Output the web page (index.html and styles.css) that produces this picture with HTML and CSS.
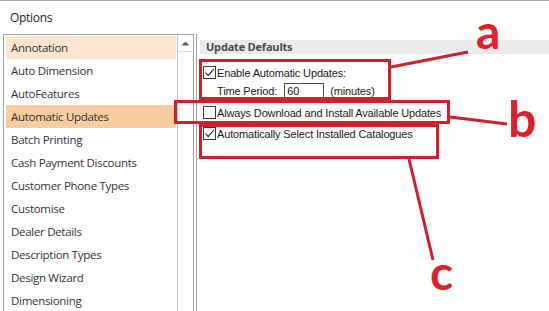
FILE: index.html
```html
<!DOCTYPE html>
<html>
<head>
<meta charset="utf-8">
<link rel="stylesheet" href="styles.css">
</head>
<body>
<div class="window">
  <div class="titlebar">Options</div>
  <div class="main">
    <div class="list">
      <ul class="items">
        <li class="item hover">Annotation</li>
        <li class="item">Auto Dimension</li>
        <li class="item">AutoFeatures</li>
        <li class="item selected">Automatic Updates</li>
        <li class="item">Batch Printing</li>
        <li class="item">Cash Payment Discounts</li>
        <li class="item">Customer Phone Types</li>
        <li class="item">Customise</li>
        <li class="item">Dealer Details</li>
        <li class="item">Description Types</li>
        <li class="item">Design Wizard</li>
        <li class="item">Dimensioning</li>
      </ul>
      <div class="scrollbar">
        <div class="sb-btn">
          <svg width="9" height="5" viewBox="0 0 9 5"><path d="M0.5 4.5 L4.5 0.5 L8.5 4.5 Z" fill="#5f5f5f"/></svg>
        </div>
      </div>
    </div>
    <div class="panel">
      <div class="group-head">Update Defaults</div>
      <div class="opt opt-first">
        <span class="cb"><svg width="11" height="11" viewBox="0 0 11 11"><path d="M1.5 5.5 L4.2 8.6 L9.8 2" fill="none" stroke="#222" stroke-width="1.1"/></svg></span>
        <span class="opt-text">Enable Automatic Updates:</span>
      </div>
      <div class="time-row">
        <span class="opt-text">Time Period:</span>
        <span class="input">60</span>
        <span class="opt-text">(minutes)</span>
      </div>
      <div class="opt opt-second">
        <span class="cb"></span>
        <span class="opt-text">Always Download and Install Available Updates</span>
      </div>
      <div class="opt opt-third">
        <span class="cb"><svg width="11" height="11" viewBox="0 0 11 11"><path d="M1.5 5.5 L4.2 8.6 L9.8 2" fill="none" stroke="#222" stroke-width="1.1"/></svg></span>
        <span class="opt-text">Automatically Select Installed Catalogues</span>
      </div>
    </div>
  </div>
</div>
<svg class="annot" width="549" height="311" viewBox="0 0 549 311">
  <g fill="none" stroke="#d21f2e" stroke-width="3">
    <rect x="200.5" y="60.5" width="189" height="38"/>
    <rect x="175.5" y="101.5" width="273" height="21"/>
    <rect x="200.5" y="125.5" width="237" height="32"/>
    <line x1="391" y1="67" x2="468" y2="52"/>
    <line x1="450" y1="117" x2="507" y2="124"/>
    <line x1="409" y1="159" x2="433" y2="260"/>
  </g>
  <g fill="#e01f2b" font-family="Lato, 'Open Sans', sans-serif" font-weight="700" font-size="48">
    <text x="476" y="49">a</text>
    <text x="508" y="137" font-size="50">b</text>
    <text x="430" y="290">c</text>
  </g>
</svg>
</body>
</html>
```
FILE: styles.css
```css
html, body {
  margin: 0;
  padding: 0;
  background: #ffffff;
}
body {
  position: relative;
  width: 549px;
  height: 311px;
  overflow: hidden;
}
.window {
  width: 549px;
  height: 311px;
  box-sizing: border-box;
  border-top: 1px solid #a9a9a9;
  display: flex;
  flex-direction: column;
}
.titlebar {
  height: 33px;
  flex: none;
  padding-left: 10px;
  display: flex;
  align-items: center;
  font-family: "Open Sans", "Noto Sans", sans-serif;
  font-size: 12px;
  color: #1e1e1e;
  letter-spacing: -0.3px;
}
.main {
  flex: 1;
  display: flex;
  min-height: 0;
}
.list {
  width: 191px;
  margin-left: 3px;
  box-sizing: border-box;
  border: 1px solid #a3a3a3;
  border-bottom: none;
  display: flex;
  flex: none;
}
.items {
  list-style: none;
  margin: 0;
  padding: 1px 1px 0 2px;
  flex: 1;
}
.item {
  height: 23px;
  line-height: 23px;
  padding-left: 5px;
  font-family: "Open Sans", "Noto Sans", sans-serif;
  font-size: 11.5px;
  letter-spacing: -0.3px;
  color: #333333;
  white-space: nowrap;
}
.item.hover {
  background: #fde6cf;
}
.item.selected {
  background: #f8cc9f;
}
.scrollbar {
  width: 15px;
  border-left: 1px solid #c4c4c4;
  flex: none;
}
.sb-btn {
  height: 16px;
  border-bottom: 1px solid #d6d6d6;
  display: flex;
  align-items: center;
  justify-content: center;
}
.panel {
  flex: 1;
  margin-left: 2px;
  border-left: 1px solid #a3a3a3;
  padding: 6px 0 0 3px;
  font-family: "Liberation Sans", Arial, sans-serif;
  font-size: 11px;
  color: #1a1a1a;
}
.group-head {
  height: 14px;
  line-height: 14px;
  background: #ebebeb;
  padding-left: 6px;
  font-family: "Open Sans", "Noto Sans", sans-serif;
  font-weight: 700;
  font-size: 11px;
  letter-spacing: -0.2px;
  color: #4a4a4a;
}
.opt {
  display: flex;
  align-items: center;
  height: 13px;
  padding-left: 3px;
  gap: 1px;
}
.opt-first {
  margin-top: 12px;
}
.opt-second {
  margin-top: 7px;
}
.opt-third {
  margin-top: 8px;
}
.cb {
  width: 13px;
  height: 13px;
  box-sizing: border-box;
  border: 1px solid #3a3a3a;
  background: #ffffff;
  display: flex;
  align-items: center;
  justify-content: center;
  flex: none;
}
.opt-text {
  letter-spacing: -0.15px;
  white-space: nowrap;
}
.time-row {
  display: flex;
  align-items: center;
  height: 16px;
  margin-top: 4px;
  padding-left: 17px;
}
.input {
  width: 40px;
  height: 16px;
  box-sizing: border-box;
  border: 1px solid #4d4d4d;
  margin-left: 7px;
  margin-right: 6px;
  padding-left: 2px;
  line-height: 16px;
  display: flex;
  align-items: center;
}
.annot {
  position: absolute;
  left: 0;
  top: 0;
}
```
